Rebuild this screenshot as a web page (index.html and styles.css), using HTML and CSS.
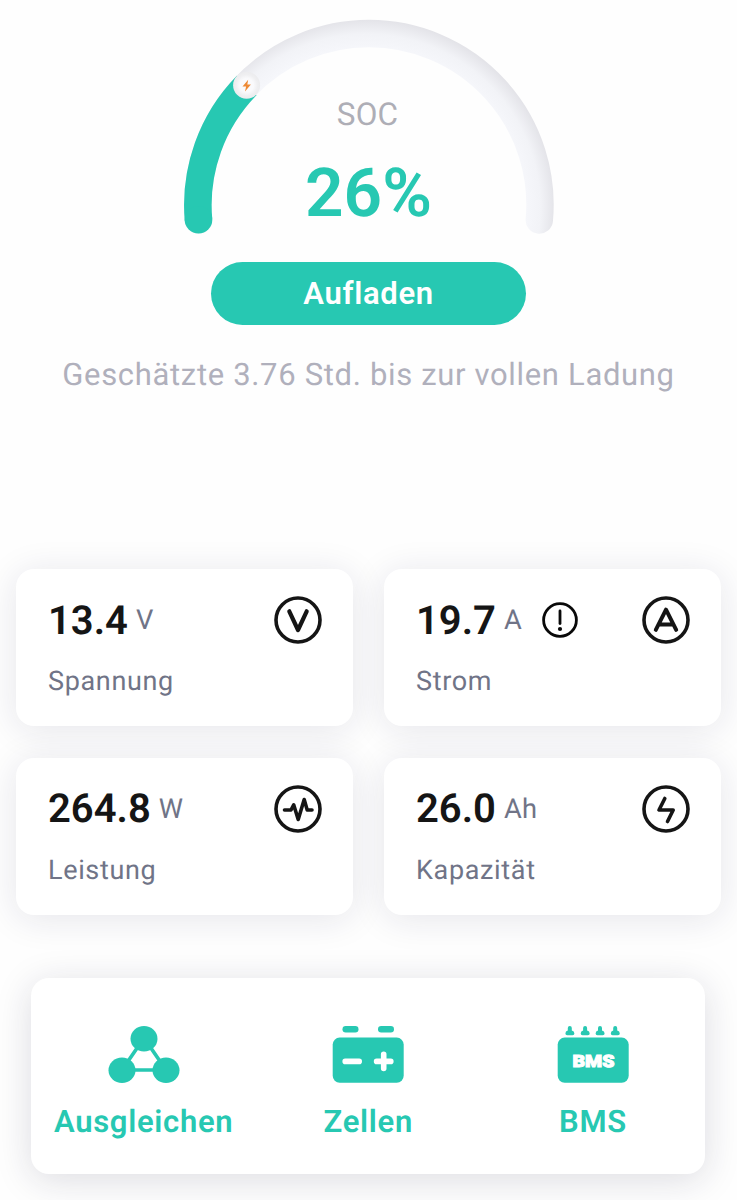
FILE: index.html
```html
<!DOCTYPE html>
<html lang="de">
<head>
<meta charset="utf-8">
<title>Batterie</title>
<link rel="stylesheet" href="styles.css">
</head>
<body>
<main class="screen">
  <section class="status">
    <div class="gauge">
      <svg class="gauge-arc" width="400" height="240" viewBox="168.5 0 400 240">
        <defs>
          <radialGradient id="track" gradientUnits="userSpaceOnUse" cx="366" cy="208" r="189">
            <stop offset=".84" stop-color="#f6f7fb"/>
            <stop offset=".92" stop-color="#f2f3f7"/>
            <stop offset="1" stop-color="#e3e3e8"/>
          </radialGradient>
          <radialGradient id="knob">
            <stop offset=".5" stop-color="#fafafc"/>
            <stop offset=".8" stop-color="#efeff1"/>
            <stop offset="1" stop-color="#ececee"/>
          </radialGradient>
        </defs>
        <path d="M198.2 220A171 171 0 1 1 538.8 220" fill="none" stroke="url(#track)" stroke-width="27.4" stroke-linecap="round"/>
        <path d="M198 220A171 171 0 0 1 246.2 85.5" fill="none" stroke="#27c8b2" stroke-width="27.6"/>
        <circle cx="198" cy="219.8" r="13.8" fill="#27c8b2"/>
        <circle cx="246.1" cy="85.3" r="13.5" fill="url(#knob)"/>
        <path d="M247.7 79.8L242 86.5H245.6L244.5 91.6L250.4 84.5H246.8Z" fill="#ee8a35"/>
      </svg>
      <div class="gauge-text">
        <div class="soc">SOC</div>
        <div class="percent">26%</div>
      </div>
    </div>
    <button class="charge">Aufladen</button>
    <p class="estimate">Geschätzte 3.76 Std. bis zur vollen Ladung</p>
  </section>

  <section class="cards">
    <article class="card">
      <div class="reading"><span class="value">13.4</span><span class="unit">V</span>
        <svg class="icon" viewBox="0 0 48 48"><circle cx="24" cy="24" r="22"/><path d="M15.3 15.3L24 34L32.7 15.3" stroke-width="4.2"/></svg>
      </div>
      <div class="label">Spannung</div>
    </article>
    <article class="card">
      <div class="reading"><span class="value">19.7</span><span class="unit">A</span>
        <svg class="info" viewBox="0 0 36 36"><circle cx="18" cy="18" r="16.4"/><path d="M18 9V21.5"/><circle class="dot" cx="18" cy="27" r="2.1"/></svg>
        <svg class="icon" viewBox="0 0 48 48"><circle cx="24" cy="24" r="22"/><path d="M13.8 33.8L24 13.7L34.2 33.8M17.5 28.5H30.5" stroke-width="4"/></svg>
      </div>
      <div class="label">Strom</div>
    </article>
    <article class="card">
      <div class="reading"><span class="value">264.8</span><span class="unit">W</span>
        <svg class="icon" viewBox="0 0 48 48"><circle cx="24" cy="24" r="22"/><path d="M10.5 25H17L19.7 19.8L24.2 34.5L30.2 14.5L33.2 25H38"/></svg>
      </div>
      <div class="label">Leistung</div>
    </article>
    <article class="card">
      <div class="reading"><span class="value">26.0</span><span class="unit">Ah</span>
        <svg class="icon" viewBox="0 0 48 48"><circle cx="24" cy="24" r="22"/><path d="M22.8 13.5L17 25H31.2L25.5 36.5"/></svg>
      </div>
      <div class="label">Kapazität</div>
    </article>
  </section>

  <nav class="menu">
    <a class="item">
      <svg class="menu-icon" viewBox="0 0 72 60"><path d="M14 46L36 14L58 46Z" fill="none" stroke="#27c8b2" stroke-width="3.6"/><g fill="#27c8b2"><ellipse cx="36" cy="14.8" rx="13.5" ry="12.8"/><ellipse cx="14" cy="46.2" rx="13.5" ry="12.8"/><ellipse cx="58" cy="46.2" rx="13.5" ry="12.8"/></g></svg>
      <span>Ausgleichen</span>
    </a>
    <a class="item">
      <svg class="menu-icon" viewBox="0 0 72 60"><g fill="#27c8b2"><rect x="10.5" y="2" width="16" height="6.4" rx="3.2"/><rect x="46" y="2" width="16" height="6.4" rx="3.2"/><rect x=".7" y="13.6" width="71" height="45.2" rx="7"/></g><path d="M13.2 37.4H27.2M44.6 37.4H58.8M51.7 30.3V44.5" fill="none" stroke="#fff" stroke-width="5.6" stroke-linecap="round"/></svg>
      <span>Zellen</span>
    </a>
    <a class="item">
      <svg class="menu-icon" viewBox="0 0 72 60"><g fill="#27c8b2"><rect x=".7" y="13.6" width="71" height="45.2" rx="7"/><path id="pin" d="M10.8 4a2 2 0 0 1 4 0V6.6Q17.4 7.2 17.4 9.5Q17.4 11.3 15.6 11.3H10.2Q8.4 11.3 8.4 9.5Q8.4 7.2 10.8 6.6Z"/><use href="#pin" x="15.3"/><use href="#pin" x="30.2"/><use href="#pin" x="45.4"/></g><text class="chip" x="36.5" y="43" text-anchor="middle" textLength="42" lengthAdjust="spacingAndGlyphs">BMS</text></svg>
      <span>BMS</span>
    </a>
  </nav>
</main>
</body>
</html>
```
FILE: styles.css
```css
* { box-sizing: border-box; }
body { margin: 0; background: #fefefe; font-family: Roboto, "Liberation Sans", sans-serif; text-rendering: geometricPrecision; }
.screen { width: 737px; height: 1200px; overflow: hidden; display: flex; flex-direction: column; }
.status { height: 569.2px; display: flex; flex-direction: column; align-items: center; }
.gauge { display: grid; justify-items: center; width: 400px; height: 262px; }
.gauge-arc { grid-area: 1 / 1; display: block; }
.gauge-text { grid-area: 1 / 1; text-align: center; padding-top: 97px; }
.soc { margin-left: -2px; font-size: 31.5px; line-height: 36px; color: #aeaeb6; letter-spacing: .2px; }
.percent { margin-top: 21px; font-size: 67.5px; line-height: 80px; font-weight: 600; color: #27c8b2; }
.charge { width: 315px; height: 63px; border: 0; border-radius: 32px; padding: 1px 0 0; background: #27c8b2; color: #fff; font: 600 31px/36px Roboto, sans-serif; letter-spacing: .7px; }
.estimate { margin: 31px 0 0; font-size: 31px; line-height: 38px; color: #b0b0bc; letter-spacing: .67px; white-space: nowrap; }
.cards { display: grid; grid-template-columns: 337px 337px; gap: 31px; row-gap: 31.4px; padding-left: 16px; }
.card { height: 157.2px; border-radius: 18px; background: #fff; padding: 27px 31px 0 32px; box-shadow: 0 4px 36px rgba(30, 30, 70, .11); }
.cards, .card { position: relative; }
.reading { display: flex; align-items: center; height: 48px; }
.value { font-size: 40px; font-weight: 600; color: #151515; letter-spacing: 0; }
.unit { margin-left: 8px; font-size: 27.3px; color: #707487; letter-spacing: .3px; }
.icon { width: 48px; height: 48px; margin-left: auto; fill: none; stroke: #151515; stroke-width: 3.6; stroke-linecap: round; stroke-linejoin: round; }
.info { width: 36px; height: 36px; margin-left: 20px; fill: none; stroke: #090909; stroke-width: 2.8; stroke-linecap: round; }
.dot { fill: #090909; stroke: none; }
.label { margin-top: 20px; font-size: 27px; line-height: 34px; color: #707487; letter-spacing: .65px; }
.menu { position: relative; flex: none; width: 674px; height: 196px; margin: 63px 0 0 31.3px; border-radius: 18px; background: #fff; display: grid; grid-template-columns: repeat(3, 1fr); box-shadow: 0 6px 36px rgba(30, 30, 60, .15); }
.item { display: flex; flex-direction: column; align-items: center; padding-top: 45.6px; font-size: 31px; line-height: 38px; font-weight: 600; letter-spacing: .7px; color: #27c8b2; }
.item span { margin-top: 19.2px; }
.menu-icon { width: 72px; height: 60px; }
.chip { font: 900 17px Roboto, sans-serif; fill: #fff; stroke: #fff; stroke-width: 1; letter-spacing: 0; }
```
